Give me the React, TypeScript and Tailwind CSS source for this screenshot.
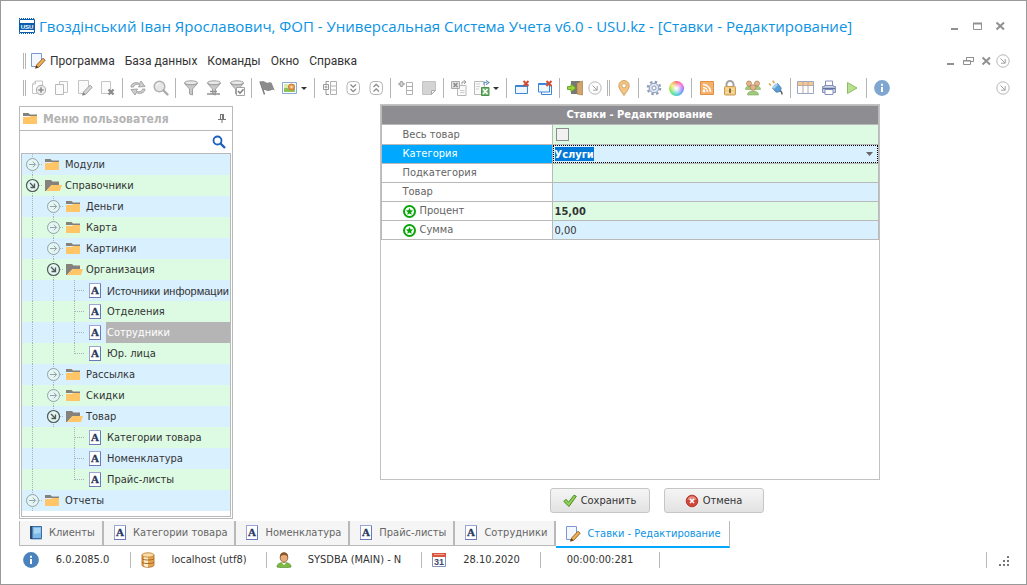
import { useState, type ReactNode } from "react";

type IconProps = { children: ReactNode; className?: string; box?: string };

function Icon({ children, className = "size-4", box = "0 0 16 16" }: IconProps) {
  return (
    <svg viewBox={box} className={`shrink-0 ${className}`} fill="none" aria-hidden="true">
      {children}
    </svg>
  );
}

const EditIcon = ({ muted = false }: { muted?: boolean }) => (
  <Icon>
    <path d="M1.5.5h10v10l-3 3h-7z" fill={muted ? "#fafafa" : "#f3f7ff"} stroke={muted ? "#c4c4c4" : "#7d98d0"} />
    <path d="M5.5 15.2 6.6 12 13 5.2l2.2 2.1-6.4 6.9z" fill={muted ? "#d6d6d6" : "#efb04f"} stroke={muted ? "#969696" : "#8a5a2a"} strokeWidth=".9" />
    <path d="m5.5 15.2 1-2.8 1.8 1.8z" fill={muted ? "#777" : "#4a2f18"} />
  </Icon>
);

const LetterIcon = () => (
  <svg viewBox="0 0 14 16" className="h-4 w-3.5 shrink-0" aria-hidden="true">
    <rect x="1.5" y=".5" width="11" height="14" fill="#fff" stroke="#9aa5d6" />
    <path d="M1 14.5h12M12.5 1v14" stroke="#6b79b8" />
    <text x="7" y="11" textAnchor="middle" fontFamily="Liberation Serif, serif" fontWeight="bold" fontSize="11" fill="#27375e" stroke="#27375e" strokeWidth=".3">
      A
    </text>
  </svg>
);

const FolderIcon = ({ open = false }: { open?: boolean }) => (
  <svg viewBox="0 0 17 12" className="h-3 w-[17px] shrink-0" aria-hidden="true">
    {open ? (
      <>
        <path d="M0 0h6l1.5 1.5H14V5H6.5L1 11H0z" fill="#85827e" />
        <path d="M1 11 6.5 5H17l-2.2 6z" fill="#ffc566" />
      </>
    ) : (
      <>
        <path d="M0 0h5.5L7 1.5h7V3H0z" fill="#85827e" />
        <path d="M0 4h6l1.5-1H14v8H0z" fill="#ffc566" />
      </>
    )}
  </svg>
);

const InfoIcon = ({ pale = false }: { pale?: boolean }) => (
  <Icon>
    <circle cx="8" cy="8" r="7.9" fill={pale ? "#7fa6d0" : "#4a82bd"} />
    <path d="M7 3.8h2v2H7zM7 7h2v5H7z" fill="#fff" />
  </Icon>
);

const CircleArrowIcon = () => (
  <Icon className="size-[14px]" box="0 0 14 14">
    <circle cx="7" cy="7" r="6.2" stroke="#b5b5b5" />
    <path d="m4.5 4.5 4.5 4.5M9.2 5v4.2H5" stroke="#a0a0a0" />
  </Icon>
);

const AddIcon = () => (
  <Icon>
    <path d="M1.5 13.5V4L4.5 1h7v5" stroke="#c4c4c4" />
    <path d="M1.5 13.5h5M4.5 1v3h-3" stroke="#c4c4c4" />
    <circle cx="10" cy="10" r="4.7" fill="#eee" stroke="#a8a8a8" />
    <path d="M10 7.3v5.4M7.3 10h5.4" stroke="#8f8f8f" strokeWidth="1.6" />
  </Icon>
);

const CopyIcon = () => (
  <Icon>
    <path d="M5.5 1.5h8v11h-8z" fill="#fbfbfb" stroke="#c4c4c4" />
    <path d="M1.5 4.5h8v10h-8z" fill="#fbfbfb" stroke="#b9b9b9" />
  </Icon>
);

const DeleteIcon = () => (
  <Icon>
    <path d="M1.5 1.5h9v12h-9z" fill="#fbfbfb" stroke="#c4c4c4" />
    <path d="m8.5 9.5 5 5M13.5 9.5l-5 5" stroke="#8c8c8c" strokeWidth="2.4" />
  </Icon>
);

const RefreshIcon = () => (
  <Icon>
    <path d="M1 7c0-4 5-5.5 8.5-3.5L11 1l4 5.5-6.5.5 1.2-2C7 3.5 4 4.5 3.5 7z" fill="#cdcdcd" stroke="#959595" strokeWidth=".8" />
    <path d="M15 9c0 4-5 5.5-8.500 3.500L5 15 1 9.500 7.500 9l-1.200 2c2.700 1.500 5.700.5 6.200-2z" fill="#cdcdcd" stroke="#959595" strokeWidth=".8" />
  </Icon>
);

const FindIcon = () => (
  <Icon>
    <circle cx="6.5" cy="6.5" r="5.3" fill="#e6e6e6" stroke="#b2b2b2" strokeWidth="1.5" />
    <path d="m10.5 10.5 4 4" stroke="#aaa" strokeWidth="2.4" strokeLinecap="round" />
    <path d="M3.5 6c.3-1.5 1.300-2.500 3-2.500" stroke="#fff" />
  </Icon>
);

const FilterIcon = ({ mark }: { mark?: "line" | "check" }) => (
  <Icon>
    <ellipse cx="8" cy="2.8" rx="6.5" ry="2" fill="#e8e8e8" stroke="#a0a0a0" />
    <path d="M1.5 3.5 6.5 9v5l3 1V9l5-5.5c-2 1.7-11 1.7-13 0z" fill="#c9c9c9" stroke="#a0a0a0" />
    {mark === "line" && <path d="M1 14h13M4 11.5h7" stroke="#929292" strokeWidth="1.6" />}
    {mark === "check" && (
      <>
        <path d="M7.5 7.5h8v8h-8z" fill="#fff" stroke="#a3a3a3" />
        <path d="m9 11 2 2.2 3.5-4" stroke="#7e7e7e" strokeWidth="1.5" />
      </>
    )}
  </Icon>
);

const FlagIcon = () => (
  <Icon>
    <path d="m1 1.5 4.5 13" stroke="#777" strokeWidth="1.4" />
    <path d="M1.2 1.8c4-2.5 5 2 8.500.7 1.500-.4 2.300-.3 3 .5l3 7.500c-2.500-2-4.500 1-7 .5-2.200-.6-3.200-1.500-4.700-.5z" fill="#8b8b8b" />
  </Icon>
);

const PictureIcon = () => (
  <Icon>
    <path d="M.5 2.5h14v11H.5z" fill="#fff" stroke="#88a9da" />
    <path d="M2 4h11v4H2z" fill="#d9ecaa" />
    <path d="M2 8h11v4H2z" fill="#8fc25a" />
    <circle cx="9.5" cy="7" r="3" fill="#eda257" stroke="#c9783b" />
    <circle cx="9.5" cy="7" r="1" fill="#fff0c0" />
  </Icon>
);

const TreeGridIcon = () => (
  <Icon>
    <path d="M8.5 1.5h6v13h-6zM8.5 6h6M8.5 10h6" stroke="#b0b0b0" />
    <path d="M1.5 4.5h5v5h-5z" fill="#fff" stroke="#999" />
    <path d="M4 5.5v3M2.5 7h3M4 1.5v3M4 1.5h3M4 9.5v5h3" stroke="#999" />
  </Icon>
);

const ChevronsIcon = ({ up = false }: { up?: boolean }) => (
  <Icon>
    <rect x="2" y="1.5" width="12.5" height="13" rx="4" stroke="#b4b4b4" />
    <path
      d={up ? "m5.5 7 2.7-2.7L11 7M5.5 11.5l2.7-2.7 2.8 2.7" : "m5.5 4.5 2.7 2.7L11 4.5M5.5 9l2.7 2.7L11 9"}
      stroke="#888"
      strokeWidth="1.3"
    />
  </Icon>
);

const AddGridIcon = () => (
  <Icon>
    <path d="M8.5 2.5h6v12h-6zM8.5 6.5h6M8.5 10.5h6" stroke="#b0b0b0" />
    <path d="M3.5 1v6M.5 4h6" stroke="#9a9a9a" strokeWidth="2.4" />
    <path d="M3.5 2v4M1.5 4h4" stroke="#eee" strokeWidth=".7" />
  </Icon>
);

const NoteIcon = () => (
  <Icon>
    <path d="M1.5 1.5h13v9l-4 4h-9z" fill="#d4d4d4" stroke="#c2c2c2" />
    <path d="M14.5 10.5h-4v4z" fill="#f3f3f3" stroke="#aaa" />
  </Icon>
);

const ExcelOutIcon = () => (
  <Icon>
    <path d="M6.5 5.5H15v10H6.5z" fill="#fbfbfb" stroke="#b9b9b9" />
    <path d="M.5 1.5h8v7h-8z" fill="#e4e4e4" stroke="#aaa" />
    <path d="m2.5 3 4 4M6.5 3l-4 4" stroke="#8c8c8c" strokeWidth="1.5" />
    <path d="M11 4.5V2h3M12.5 0 15 2l-2 2" stroke="#999" />
    <path d="M9 10.5h4.5M9 12.5h4.5" stroke="#ccc" />
  </Icon>
);

const ExcelInIcon = () => (
  <Icon>
    <path d="M.5 1.5h10v13H.5z" fill="#fafafa" stroke="#b9b9b9" />
    <path d="M2 4h4M2 6.5h4M2 9h3" stroke="#d0d0d0" />
    <path d="M7.5 7.5H15v8H7.5z" fill="#6fb36b" stroke="#4c9049" />
    <path d="m9 9 4.5 5M13.5 9 9 14" stroke="#fff" strokeWidth="1.5" />
    <path d="M10 5V2.5h3M12 .5l3 2-3 2.2" stroke="#6c9bc0" strokeWidth="1.2" />
  </Icon>
);

const CloseWindowIcon = ({ all = false }: { all?: boolean }) => (
  <Icon>
    {all && <path d="M4.5 5.5h10v9h-10z" fill="#fff" stroke="#3a86d8" />}
    <path d={all ? "M1.5 3.5h11V12h-11z" : "M1.5 5.5h12v8h-12z"} fill="#eef6ff" stroke="#3a86d8" />
    <path d={all ? "M1.5 4h11" : "M1.5 6h12"} stroke="#3a86d8" strokeWidth="2" />
    <path d="m9.5 1 5 5M14.5 1l-5 5" stroke="#d24a32" strokeWidth="2" />
  </Icon>
);

const ExitIcon = () => (
  <Icon>
    <path d="M4 1h9v13H4z" fill="#777" />
    <path d="m10 3 5.5-2v14L10 14z" fill="#d3a56a" stroke="#a37b4a" strokeWidth=".7" />
    <path d="M.5 6.5H4V3.8L9 8l-5 4.200V9.500H.5z" fill="#9bd437" stroke="#5c9420" strokeWidth=".8" />
  </Icon>
);

const PinIcon = () => (
  <Icon>
    <path d="M8 15.5C5.5 11.5 2.8 9 2.8 5.7a5.200 5.200 0 0 1 10.400 0c0 3.300-2.700 5.800-5.200 9.800z" fill="#f2c583" stroke="#cf9a55" strokeWidth=".9" />
    <circle cx="8" cy="5.7" r="2.2" fill="#fff" stroke="#cf9a55" strokeWidth=".8" />
  </Icon>
);

const GearIcon = () => (
  <Icon>
    <circle cx="8" cy="8" r="6.3" stroke="#8d9bb8" strokeWidth="2" strokeDasharray="2.5 2.45" />
    <circle cx="8" cy="8" r="4.8" fill="#dfe5f1" stroke="#8d9bb8" />
    <circle cx="8" cy="8" r="2" fill="#fff" stroke="#8d9bb8" />
  </Icon>
);

const PaletteIcon = () => (
  <span className="size-[15px] rounded-full bg-[radial-gradient(circle,#fff_5%,transparent_65%),conic-gradient(#fb6f6f,#f66ade,#8a7cf5,#50b8f5,#45dc9a,#8be552,#f4e35b,#fb6f6f)]" />
);

const RssIcon = () => (
  <Icon>
    <path d="M1.5 1.5h13v13h-13z" fill="#f6b06a" stroke="#e28f41" />
    <circle cx="5" cy="11" r="1.4" fill="#fff" />
    <path d="M4 7.5A4.5 4.5 0 0 1 8.5 12M4 4.5a7.5 7.5 0 0 1 7.5 7.5" stroke="#fff" strokeWidth="1.5" />
  </Icon>
);

const LockIcon = () => (
  <Icon>
    <path d="M4.5 8V4.5a3.5 3.5 0 0 1 7 0V8" stroke="#a2a2a2" strokeWidth="2" />
    <rect x="2.5" y="6.5" width="11" height="8.5" rx="1" fill="#f3cd83" stroke="#c89a52" />
    <path d="M4 9h8M4 12.5h8" stroke="#fbe3b0" />
    <path d="M7.2 8.5h1.600V13H7.200z" fill="#6d5530" />
  </Icon>
);

const UserIcon = () => (
  <Icon>
    <path d="M1 15c0-3 2.5-4.500 7-4.500s7 1.500 7 4.500c-2 .8-12 .8-14 0z" fill="#7dbb42" stroke="#548a2c" strokeWidth=".7" />
    <path d="M5.5 10.5h5L8 13z" fill="#fff" />
    <ellipse cx="8" cy="5.5" rx="3.8" ry="4.7" fill="#e6ac79" stroke="#7f4b20" strokeWidth=".8" />
    <path d="M4 5.5C3.5 1.500 6 .4 8 .4s4.500 1.100 4 5.100c-1-2-2-2.800-4-2.500-2 .2-3 .5-4 2.500z" fill="#8a5526" />
  </Icon>
);

const UsersIcon = () => (
  <Icon>
    <g stroke="#7fa95e" strokeWidth=".6" fill="#a0cb7b">
      <path d="M.5 9.5C.5 7 2 6 4 6s3 1 3 3.500zM9 9.500C9 7 10.500 6 12 6s3.500 1 3.500 3.500zM2.500 15c0-3 2.500-4 5.500-4s5.500 1 5.500 4z" />
    </g>
    <g fill="#e3b58c" stroke="#b07c50" strokeWidth=".7">
      <circle cx="4" cy="3.5" r="2.5" />
      <circle cx="12" cy="3.5" r="2.5" />
      <circle cx="8" cy="7.5" r="2.8" />
    </g>
  </Icon>
);

const PlugIcon = () => (
  <Icon>
    <path d="M10.5 10.5c2 0 3.500 1.500 3.500 4" stroke="#5f5f5f" strokeWidth="1.5" />
    <path d="m4.5 8 5-4.5 3.500 4.200c.5 3-2.500 5-5 4.300z" fill="#5b9fd6" stroke="#3a74a8" strokeWidth=".8" />
    <path d="m4 7 4-4 2 2-4 4z" fill="#a6cfef" />
    <path d="M3 5.5l-2-2M6.500 3l-2-2.200" stroke="#d9a640" strokeWidth="1.6" />
  </Icon>
);

const TableIcon = () => (
  <Icon box="0 0 17 16" className="h-4 w-[17px]">
    <path d="M.5 1.5h16v12H.5z" fill="#fdfdff" stroke="#9aa6c8" />
    <path d="M1 2h15v3.500H1z" fill="#f3c891" />
    <path d="M.5 5.5h16M6 1.500v12M11 1.500v12" stroke="#bba9a3" />
  </Icon>
);

const PrintIcon = () => (
  <Icon>
    <path d="M4.5 1h7v5h-7z" fill="#fff" stroke="#8492bb" />
    <path d="M1.5 6.5h2v-1h9v1h2v6h-13z" fill="#ccd5ea" stroke="#8492bb" />
    <path d="M4 9.5h8v5H4z" fill="#fff" stroke="#8492bb" />
    <path d="M2 8.5h12" stroke="#66749c" strokeWidth="1.4" />
  </Icon>
);

const PlayIcon = () => (
  <Icon>
    <path d="M3.5 2.5 13 8l-9.500 5.500z" fill="#b9df90" stroke="#8dba65" strokeLinejoin="round" />
  </Icon>
);

const BookIcon = () => (
  <Icon box="0 0 14 16" className="h-4 w-3.5">
    <path d="M1.5 1.5h11v12h-11z" fill="#7db8e6" stroke="#3a6ea3" />
    <path d="M1 1h2.500v13H1z" fill="#2b4d75" />
    <path d="M2 14.5h11" stroke="#b8cbdc" />
    <path d="M5 3h6.500v5L5 9z" fill="#a9d5f4" />
  </Icon>
);

const DatabaseIcon = () => (
  <Icon>
    <path d="M2 3v10c0 3 12 3 12 0V3z" fill="#e7a652" stroke="#a96522" strokeWidth=".8" />
    <path d="M4 3.5h4V15C6 15 4.500 14.500 4 14z" fill="#fff0cf" />
    <path d="M2 6.5c1 2 11 2 12 0M2 10c1 2 11 2 12 0" stroke="#a96522" />
    <ellipse cx="8" cy="3" rx="6" ry="2.2" fill="#fbdca4" stroke="#b9762c" strokeWidth=".8" />
  </Icon>
);

const CalendarIcon = () => (
  <Icon>
    <path d="M1.5 1.5h13v13h-13z" fill="#fff" stroke="#8793b5" />
    <path d="M1 1h14v4H1z" fill="#d9583f" />
    <path d="M3 2.5h10" stroke="#f0a090" />
    <text x="8" y="13" textAnchor="middle" fontFamily="Liberation Sans, sans-serif" fontSize="9" fontWeight="bold" fill="#3c4a6e">
      31
    </text>
  </Icon>
);

const CheckIcon = () => (
  <Icon className="size-3.5" box="0 0 14 14">
    <path d="M.8 7.5 3 5.3l2.500 2.900L11 1.200l2.300 1.100L6 12.500z" fill="#8ed04f" stroke="#4c8a2a" />
  </Icon>
);

const CancelIcon = () => (
  <Icon className="size-3.5" box="0 0 14 14">
    <circle cx="7" cy="7" r="5.8" fill="#cf453a" stroke="#b5392f" />
    <path d="M2.5 5.5a4.800 4.800 0 0 1 9 0c-3 1.500-6 1.500-9 0z" fill="#e58c82" />
    <path d="m5 5 4 4M9 5 5 9" stroke="#fff" strokeWidth="1.6" />
  </Icon>
);

const RequiredIcon = () => (
  <Icon className="size-[13px]" box="0 0 13 13">
    <circle cx="6.5" cy="6.5" r="5.5" fill="#fff" stroke="#0aa50a" strokeWidth="2" />
    <path d="m6.5 3 1.100 2.200 2.500.3-1.900 1.700.5 2.600-2.200-1.300-2.200 1.300.5-2.600-1.900-1.700 2.500-.3z" fill="#0aa50a" />
  </Icon>
);

const Handle = () => <span className="h-4 w-[3px] shrink-0 border-x border-[#b4b4b4]" />;

const Separator = () => (
  <span className="flex w-[7px] shrink-0 justify-center">
    <span className="h-5 w-px bg-[#b4b4b4]" />
  </span>
);

type ToolProps = { label: string; icon: ReactNode; menu?: boolean; narrow?: boolean };

function Tool({ label, icon, menu = false, narrow = false }: ToolProps) {
  return (
    <button type="button" aria-label={label} className={`flex h-6 shrink-0 items-center ${menu ? "w-[33px]" : narrow ? "w-[18px]" : "w-[23px]"}`}>
      <span className={`flex items-center justify-center ${narrow ? "w-[18px]" : "w-[23px]"}`}>{icon}</span>
      {menu && (
        <svg viewBox="0 0 6 3" className="h-[3px] w-1.5" aria-hidden="true">
          <path d="M0 0h6L3 3z" fill="#333" />
        </svg>
      )}
    </button>
  );
}

function WindowButton({ label, kind }: { label: string; kind: "min" | "max" | "restore" | "close" }) {
  return (
    <button type="button" aria-label={label} className="flex h-5 items-center">
      <svg viewBox="0 0 11 10" className="h-2.5 w-[11px]" fill="none" stroke="#909090" aria-hidden="true">
        {kind === "min" && <path d="M2 8h7" strokeWidth="2" />}
        {kind === "max" && (
          <>
            <path d="M1.5 2.5h8v6h-8z" />
            <path d="M1 2.5h9" strokeWidth="2" />
          </>
        )}
        {kind === "restore" && <path d="M3.5 4V1.5h7v4H8M3 1.5h8M.5 4.5h7v4h-7zM0 5h8" />}
        {kind === "close" && <path d="m1.500 1.500 7.500 7M9 1.500l-7.500 7" strokeWidth="2" />}
      </svg>
    </button>
  );
}

const MENU = ["Программа", "База данных", "Команды", "Окно", "Справка"];

function TopMenu() {
  return (
    <div className="flex h-5 items-center pl-[22px] pr-4">
      <Handle />
      <span className="ml-1 flex">
        <EditIcon />
      </span>
      <nav className="ml-1 flex gap-2.5 font-['Roboto',sans-serif] text-xs text-[#333]">
        {MENU.map((item) => (
          <button key={item} type="button">
            {item}
          </button>
        ))}
      </nav>
      <div className="ml-auto mr-1 flex items-center gap-[7px]">
        <WindowButton label="Свернуть документ" kind="min" />
        <WindowButton label="Восстановить документ" kind="restore" />
        <WindowButton label="Закрыть документ" kind="close" />
      </div>
      <CircleArrowIcon />
    </div>
  );
}

function Toolbar() {
  return (
    <div className="flex h-8 items-center pl-[22px] pr-4 pt-0.5">
      <Handle />
      <span className="w-px" />
      <Tool label="Добавить" icon={<AddIcon />} />
      <Tool label="Копировать" icon={<CopyIcon />} />
      <Tool label="Редактировать" icon={<EditIcon muted />} />
      <Tool label="Удалить" icon={<DeleteIcon />} />
      <Separator />
      <Tool label="Обновить" icon={<RefreshIcon />} />
      <Tool label="Поиск" icon={<FindIcon />} />
      <Separator />
      <Tool label="Фильтр" icon={<FilterIcon />} />
      <Tool label="Строка фильтра" icon={<FilterIcon mark="line" />} />
      <Tool label="Настройка фильтра" icon={<FilterIcon mark="check" />} />
      <Separator />
      <Tool label="Метка" icon={<FlagIcon />} />
      <Tool label="Изображение" icon={<PictureIcon />} menu />
      <Separator />
      <Tool label="Группировка" icon={<TreeGridIcon />} />
      <Tool label="Развернуть все" icon={<ChevronsIcon />} />
      <Tool label="Свернуть все" icon={<ChevronsIcon up />} />
      <Separator />
      <Tool label="Добавить столбец" icon={<AddGridIcon />} />
      <Tool label="Заметка" icon={<NoteIcon />} />
      <Separator />
      <Tool label="Экспорт" icon={<ExcelOutIcon />} />
      <Tool label="Импорт" icon={<ExcelInIcon />} menu />
      <Separator />
      <Tool label="Закрыть окно" icon={<CloseWindowIcon />} />
      <Tool label="Закрыть все окна" icon={<CloseWindowIcon all />} />
      <Separator />
      <Tool label="Выход" icon={<ExitIcon />} />
      <Tool label="Настроить панель" icon={<CircleArrowIcon />} narrow />
      <span className="w-[3px]" />
      <Handle />
      <span className="w-0.5" />
      <Tool label="Карта" icon={<PinIcon />} />
      <Separator />
      <Tool label="Настройки" icon={<GearIcon />} />
      <Tool label="Оформление" icon={<PaletteIcon />} />
      <Separator />
      <Tool label="Рассылка" icon={<RssIcon />} />
      <Tool label="Блокировка" icon={<LockIcon />} />
      <Tool label="Пользователи" icon={<UsersIcon />} />
      <Tool label="Подключение" icon={<PlugIcon />} />
      <Separator />
      <Tool label="Таблица" icon={<TableIcon />} />
      <Tool label="Печать" icon={<PrintIcon />} />
      <Tool label="Запуск" icon={<PlayIcon />} />
      <Separator />
      <Tool label="Информация" icon={<InfoIcon pale />} />
      <span className="ml-auto">
        <CircleArrowIcon />
      </span>
    </div>
  );
}

type Cell = "line" | "none" | "branch" | "end" | "open" | "closed";

type TreeItem = { label: string; cells: Cell[] };

const TREE: TreeItem[] = [
  { label: "Модули", cells: ["closed"] },
  { label: "Справочники", cells: ["open"] },
  { label: "Деньги", cells: ["line", "closed"] },
  { label: "Карта", cells: ["line", "closed"] },
  { label: "Картинки", cells: ["line", "closed"] },
  { label: "Организация", cells: ["line", "open"] },
  { label: "Источники информации", cells: ["line", "line", "branch"] },
  { label: "Отделения", cells: ["line", "line", "branch"] },
  { label: "Сотрудники", cells: ["line", "line", "branch"] },
  { label: "Юр. лица", cells: ["line", "line", "end"] },
  { label: "Рассылка", cells: ["line", "closed"] },
  { label: "Скидки", cells: ["line", "closed"] },
  { label: "Товар", cells: ["line", "open"] },
  { label: "Категории товара", cells: ["line", "none", "branch"] },
  { label: "Номенклатура", cells: ["line", "none", "branch"] },
  { label: "Прайс-листы", cells: ["line", "none", "end"] },
  { label: "Отчеты", cells: ["closed"] },
];

// Labels longer than this do not fit the panel in the default face.
const LONG_LABEL = 18;

function TreeCell({ kind }: { kind: Cell }) {
  const expander = kind === "open" || kind === "closed";
  const color = kind === "open" ? "#4d5a55" : "#93a3a6";
  return (
    <svg viewBox="0 0 21 21" className="size-[21px] shrink-0" fill="none" aria-hidden="true">
      <g stroke="#a9b4b8" strokeDasharray="1 1" shapeRendering="crispEdges">
        {kind !== "none" && <path d={kind === "end" ? "M10.5 0v11" : "M10.5 0v21"} />}
        {kind !== "none" && kind !== "line" && <path d="M11 10.5h10" />}
      </g>
      {expander && (
        <>
          <circle cx="10.5" cy="10.5" r="6" fill="#e4f6f3" stroke={color} strokeWidth={kind === "open" ? "1.2" : "1"} />
          {kind === "open" ? (
            <path d="m8 8 4.500 4.500M12.500 8.500v4h-4" stroke={color} strokeWidth="1.3" />
          ) : (
            <path d="M7 10.5h6.500M10.800 7.700l2.800 2.800-2.800 2.800" stroke={color} />
          )}
        </>
      )}
    </svg>
  );
}

function Sidebar() {
  const [selected, setSelected] = useState("Сотрудники");

  return (
    <aside className="flex w-[214px] shrink-0 flex-col border border-[#b9b9b9]">
      <header className="flex h-6 items-center border-b border-[#b9b9b9] pl-[3px] pr-1.5">
        <FolderIcon />
        <h2 className="ml-[3px] text-xs font-bold text-[#b4b4b4]">Меню пользователя</h2>
        <svg viewBox="0 0 8 9" className="ml-auto h-[9px] w-2" fill="none" stroke="#777" aria-hidden="true">
          <path d="M2 .5h4M2.5 0v5M5.5 0v5M4.5 0v5M0 5.5h8M4 6v3" />
        </svg>
      </header>
      <label className="flex h-[22px] items-center justify-end pr-1.5">
        <input type="text" aria-label="Поиск по меню" className="min-w-0 flex-1 bg-transparent px-1 outline-none" />
        <svg viewBox="0 0 14 14" className="size-[14px]" fill="none" stroke="#1c5fbf" aria-hidden="true">
          <circle cx="5.5" cy="5.5" r="4" strokeWidth="1.8" />
          <path d="m8.500 8.500 4.500 4.500" strokeWidth="2.4" />
        </svg>
      </label>
      <ul className="mx-px mb-px flex-1 border border-[#b9b9b9]">
        {TREE.map((item) => {
          const depth = item.cells.length;
          const isSelected = item.label === selected;
          return (
            <li key={item.label} className="flex h-[21px] items-center odd:bg-[#d9f0ff] even:bg-[#ddfbe3]">
              {item.cells.map((kind, index) => (
                <TreeCell key={index} kind={kind} />
              ))}
              <span className={`flex w-[21px] shrink-0 ${depth === 3 ? "pl-[3px]" : "justify-center"}`}>
                {depth === 3 ? <LetterIcon /> : <FolderIcon open={item.cells[depth - 1] === "open"} />}
              </span>
              <button
                type="button"
                onClick={() => setSelected(item.label)}
                className={`h-full min-w-0 flex-1 whitespace-nowrap pl-px pt-px text-left ${isSelected ? "bg-[#b5b5b5] text-white" : "text-[#333]"} ${
                  item.label.length > LONG_LABEL ? "font-['Liberation_Sans',sans-serif]" : ""
                }`}
              >
                {item.label}
              </button>
            </li>
          );
        })}
      </ul>
    </aside>
  );
}

type FieldRowProps = { label: string; id: string; required?: boolean; active?: boolean; children: ReactNode };

function FieldRow({ label, id, required = false, active = false, children }: FieldRowProps) {
  return (
    <tr className="h-[19px] border-t border-[#b9b9b9] first:h-5 odd:bg-[#ddfbe3] even:bg-[#d9f0ff]">
      <th
        scope="row"
        className={`w-[171px] border-r border-[#b9b9b9] p-0 text-left font-normal ${active ? "bg-[#00a8ff] text-white" : "bg-white text-[#646464]"}`}
      >
        <label htmlFor={id} className="flex h-[18px] items-center gap-1 pl-[21px]">
          {required && <RequiredIcon />}
          {label}
        </label>
      </th>
      <td className="p-0">{children}</td>
    </tr>
  );
}

const FIELD = "block h-[18px] w-full bg-transparent px-0.5 text-[#333] outline-none";

const FORM_BUTTON =
  "flex h-[25px] w-[100px] items-center justify-center gap-1 rounded-[3px] border border-[#c6c6c6] bg-linear-to-b from-[#f5f5f5] to-[#e2e2e2] text-[#333]";

function RateForm() {
  return (
    <form className="flex min-w-0 flex-1 flex-col items-center" onSubmit={(event) => event.preventDefault()}>
      <div className="flex w-[500px] flex-1 flex-col">
        <div className="flex-1 border border-[#c2c2c2]">
          <table className="w-full border-collapse border border-[#b9b9b9]">
            <thead>
              <tr className="h-[19px] bg-[#8e8d92]">
                <th colSpan={2} className="p-0 pl-5 font-bold text-white">
                  Ставки - Редактирование
                </th>
              </tr>
            </thead>
            <tbody>
              <FieldRow label="Весь товар" id="all-goods">
                <input
                  id="all-goods"
                  type="checkbox"
                  className="ml-[3px] block size-[13px] appearance-none border border-[#8c8c8c] bg-[#f1f1f1] checked:bg-[#00a8ff]"
                />
              </FieldRow>
              <FieldRow label="Категория" id="category" active>
                <div className="flex h-[18px] items-center justify-between border border-dotted border-black pl-px pr-1">
                  <select id="category" className="field-sizing-content h-3.5 appearance-none bg-[#0078d7] font-bold text-white outline-none">
                    <option>Услуги</option>
                    <option>Товары</option>
                  </select>
                  <svg viewBox="0 0 7 4" className="h-1 w-[7px]" aria-hidden="true">
                    <path d="M0 0h7L3.5 4z" fill="#666" />
                  </svg>
                </div>
              </FieldRow>
              <FieldRow label="Подкатегория" id="subcategory">
                <input id="subcategory" type="text" className={FIELD} />
              </FieldRow>
              <FieldRow label="Товар" id="product">
                <input id="product" type="text" className={FIELD} />
              </FieldRow>
              <FieldRow label="Процент" id="percent" required>
                <input id="percent" type="text" defaultValue="15,00" className={`${FIELD} font-bold`} />
              </FieldRow>
              <FieldRow label="Сумма" id="sum" required>
                <input id="sum" type="text" defaultValue="0,00" className={FIELD} />
              </FieldRow>
            </tbody>
          </table>
        </div>
        <div className="flex justify-end gap-3.5 pb-2 pr-[116px] pt-2">
          <button type="submit" className={FORM_BUTTON}>
            <CheckIcon />
            Сохранить
          </button>
          <button type="button" className={FORM_BUTTON}>
            <CancelIcon />
            Отмена
          </button>
        </div>
      </div>
    </form>
  );
}

const TABS = [
  { label: "Клиенты", icon: <BookIcon /> },
  { label: "Категории товара", icon: <LetterIcon /> },
  { label: "Номенклатура", icon: <LetterIcon /> },
  { label: "Прайс-листы", icon: <LetterIcon /> },
  { label: "Сотрудники", icon: <LetterIcon /> },
  { label: "Ставки - Редактирование", icon: <EditIcon /> },
];

function DocumentTabs() {
  const [current, setCurrent] = useState("Ставки - Редактирование");

  return (
    <div role="tablist" className="flex h-7 items-start pl-[18px]">
      {TABS.map(({ label, icon }) => {
        const active = label === current;
        return (
          <button
            key={label}
            type="button"
            role="tab"
            aria-selected={active}
            onClick={() => setCurrent(label)}
            className={`flex items-center gap-1.5 whitespace-nowrap border-[#b9b9b9] pl-[9px] ${
              active ? "h-[27px] border-r border-b-2 border-b-[#00a8ff] pr-2 text-[#0c93e4]" : "h-[25px] border-b border-r-2 bg-[#f5f5f5] pr-[7px] text-[#666] first:border-l"
            }`}
          >
            {icon}
            {label}
          </button>
        );
      })}
    </div>
  );
}

const StatusDivider = () => <span className="mt-[3px] h-4 w-px bg-[#b9b9b9]" />;

function StatusBar() {
  return (
    <footer className="flex h-[35px] items-start pl-[18px] pr-4 text-[#333]">
      <div className="flex h-[21px] w-[111px] items-center px-1">
        <InfoIcon />
        <span className="flex-1 text-center">6.0.2085.0</span>
      </div>
      <StatusDivider />
      <div className="flex h-[21px] w-[135px] items-center pl-[9px] pr-1">
        <DatabaseIcon />
        <span className="flex-1 text-center">localhost (utf8)</span>
      </div>
      <StatusDivider />
      <div className="flex h-[21px] w-[154px] items-center pl-[9px] pr-1">
        <UserIcon />
        <span className="flex-1 text-center">SYSDBA (MAIN) - N</span>
      </div>
      <StatusDivider />
      <div className="flex h-[21px] w-[118px] items-center pl-[9px] pr-1">
        <CalendarIcon />
        <span className="flex-1 text-center">28.10.2020</span>
      </div>
      <StatusDivider />
      <span className="flex h-[21px] w-[118px] items-center justify-center">00:00:00:281</span>
      <StatusDivider />
      <span className="ml-auto" />
      <StatusDivider />
      <svg viewBox="0 0 11 11" className="ml-3 mt-[7px] size-[11px]" fill="#777" aria-hidden="true">
        <path d="M8 0h2v2H8zM4 4h2v2H4zM8 4h2v2H8zM0 8h2v2H0zM4 8h2v2H4zM8 8h2v2H8z" />
      </svg>
    </footer>
  );
}

const LogoIcon = () => (
  <svg viewBox="0 0 16 16" className="size-4 shrink-0" aria-hidden="true">
    <path d="M0 .5h16M0 15.5h16" stroke="#0b5cab" strokeDasharray="1 1" />
    <path d="M.5 1.5h15v13H.5z" fill="#fff" stroke="#0b5cab" />
    <path d="M1 5h14v7H1z" fill="#0b5cab" />
    <text x="8" y="10.8" textAnchor="middle" fontFamily="Liberation Sans, sans-serif" fontSize="6" fontWeight="bold" fill="#fff">
      USU
    </text>
  </svg>
);

export default function App() {
  return (
    <div className="flex min-h-screen flex-col border border-[#999] bg-white font-['DejaVu_Sans_Condensed','DejaVu_Sans',sans-serif] text-[11px] leading-4">
      <header className="flex h-[50px] items-center pl-[18px] pr-5">
        <LogoIcon />
        <h1 className="ml-1 whitespace-nowrap font-['Open_Sans',sans-serif] text-[15px] text-[#0c93e4]">
          Гвоздінський Іван Ярославович, ФОП - Универсальная Система Учета v6.0 - USU.kz - [Ставки - Редактирование]
        </h1>
        <div className="ml-auto flex gap-3">
          <WindowButton label="Свернуть" kind="min" />
          <WindowButton label="Развернуть" kind="max" />
          <WindowButton label="Закрыть" kind="close" />
        </div>
      </header>
      <TopMenu />
      <Toolbar />
      <main className="flex flex-1 pl-[18px]">
        <div className="flex pb-0.5 pt-[3px]">
          <Sidebar />
        </div>
        <div className="flex min-w-0 flex-1 pt-px">
          <RateForm />
        </div>
      </main>
      <DocumentTabs />
      <StatusBar />
    </div>
  );
}
